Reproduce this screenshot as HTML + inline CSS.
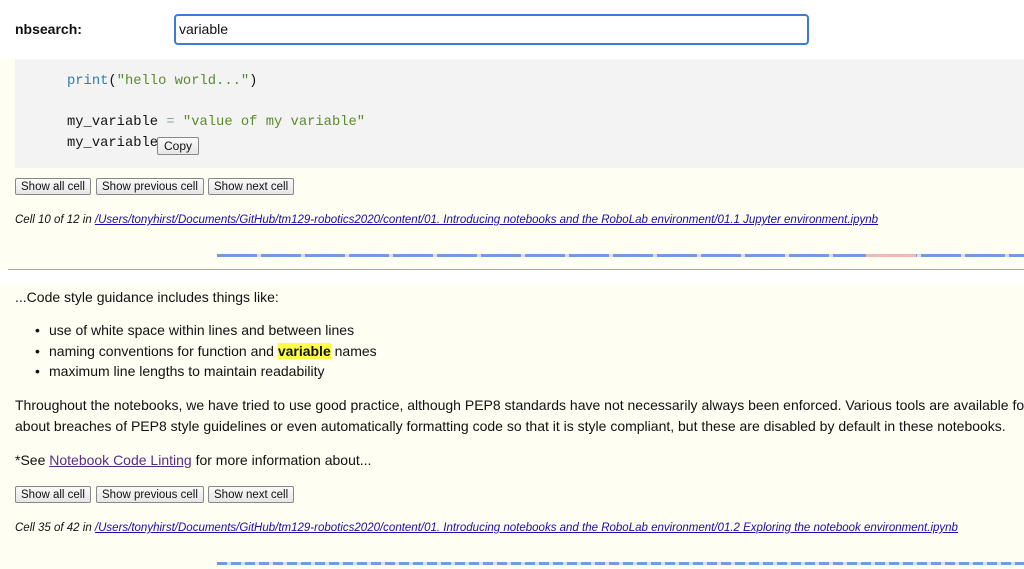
<!DOCTYPE html>
<html><head><meta charset="utf-8"><style>
body{margin:0;width:1024px;height:569px;overflow:hidden;background:#fefef3;font-family:"Liberation Sans",sans-serif;position:relative;color:#111}
.a{position:absolute;white-space:nowrap}
.btn{position:absolute;height:17px;border:1px solid #888;border-radius:2px;background:linear-gradient(#fafafa,#e6e6e6);font-size:11.5px;line-height:17px;padding:0 5px;box-sizing:border-box;color:#111}
.code{font-family:"Liberation Mono",monospace;font-size:13.8px}
.meta{font-size:11.5px;font-style:italic}
.meta a{color:#1a0dab;text-decoration:underline}
.p{font-size:14px}
.bar{position:absolute;height:3px}
.clip{position:absolute;left:0;top:0;width:1024px;height:569px;overflow:hidden}
</style></head><body><div class="clip">
<div class="a" style="left:0;top:0;width:1024px;height:59px;background:#fff"></div>
<div class="a p" style="left:15px;top:21px;font-weight:bold">nbsearch:</div>
<div class="a" style="left:174px;top:14px;width:635px;height:31px;box-sizing:border-box;border:2px solid #3b7bd4;border-radius:4px;background:#fff;font-size:14px;line-height:27px;padding-left:3px">variable</div>
<div class="a" style="left:15px;top:59px;width:1009px;height:109px;background:#f3f3f3"></div>
<div class="a code" style="left:67px;top:74px"><span style="color:#2c7bb6">print</span>(<span style="color:#5a8a2a">"hello world..."</span>)</div>
<div class="a code" style="left:67px;top:115px">my_variable <span style="color:#8a8">=</span> <span style="color:#5a8a2a">"value of my variable"</span></div>
<div class="a code" style="left:67px;top:136px">my_variable</div>
<div class="btn" style="left:157px;top:137px;height:18px;font-size:12px;padding:0 6px">Copy</div>
<div class="btn" style="left:15px;top:178px">Show all cell</div>
<div class="btn" style="left:96px;top:178px">Show previous cell</div>
<div class="btn" style="left:208px;top:178px">Show next cell</div>
<div class="a meta" style="left:15px;top:214px">Cell 10 of 12 in <a>/Users/tonyhirst/Documents/GitHub/tm129-robotics2020/content/01. Introducing notebooks and the RoboLab environment/01.1 Jupyter environment.ipynb</a></div>
<div class="bar" style="left:217px;top:254px;width:807px;background:repeating-linear-gradient(90deg,#6f9be0 0 40px,#dde 40px 44px)"></div>
<div class="bar" style="left:866px;top:254px;width:50px;background:#f2b8b8"></div>
<div class="a" style="left:8px;top:269px;width:1016px;height:1px;background:#aaa"></div>
<div class="a" style="left:0;top:270px;width:1024px;height:14px;background:#fff"></div>
<div class="a p" style="left:15px;top:289px">...Code style guidance includes things like:</div>
<div class="a p" style="left:35px;top:322px">•</div><div class="a p" style="left:49px;top:322px">use of white space within lines and between lines</div>
<div class="a p" style="left:35px;top:343px">•</div><div class="a p" style="left:49px;top:343px">naming conventions for function and <b style="background:#ffff44">variable</b> names</div>
<div class="a p" style="left:35px;top:363px">•</div><div class="a p" style="left:49px;top:363px">maximum line lengths to maintain readability</div>
<div class="a p" style="left:15px;top:397px">Throughout the notebooks, we have tried to use good practice, although PEP8 standards have not necessarily always been enforced. Various tools are available for wa</div>
<div class="a p" style="left:15px;top:418px">about breaches of PEP8 style guidelines or even automatically formatting code so that it is style compliant, but these are disabled by default in these notebooks.</div>
<div class="a p" style="left:15px;top:452px">*See <span style="color:#5a2a8a;text-decoration:underline">Notebook Code Linting</span> for more information about...</div>
<div class="btn" style="left:15px;top:486px">Show all cell</div>
<div class="btn" style="left:96px;top:486px">Show previous cell</div>
<div class="btn" style="left:208px;top:486px">Show next cell</div>
<div class="a meta" style="left:15px;top:522px">Cell 35 of 42 in <a>/Users/tonyhirst/Documents/GitHub/tm129-robotics2020/content/01. Introducing notebooks and the RoboLab environment/01.2 Exploring the notebook environment.ipynb</a></div>
<div class="bar" style="left:217px;top:562px;width:807px;background:repeating-linear-gradient(90deg,#6f9be0 0 10px,#dde 10px 14px)"></div>
</div></body></html>
